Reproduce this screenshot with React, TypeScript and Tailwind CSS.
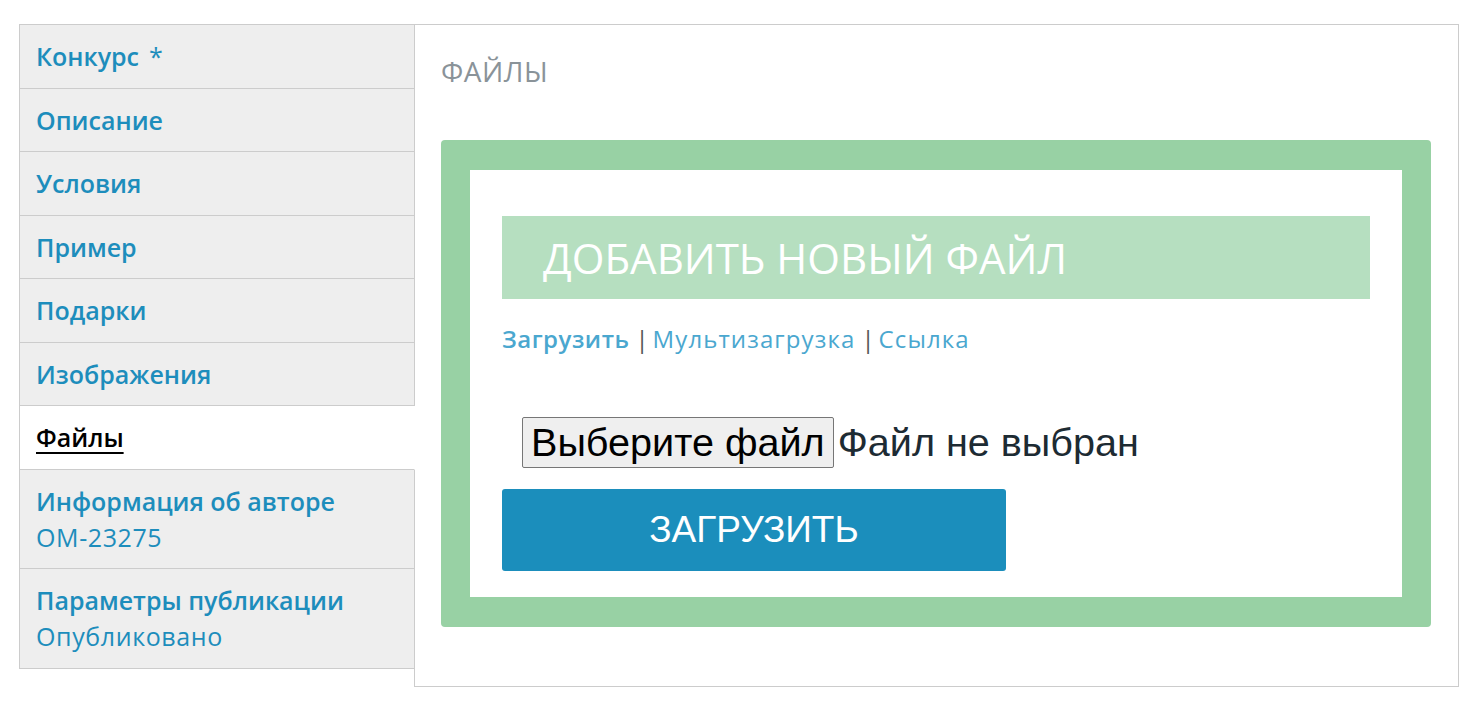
type NavItem = {
  label: string;
  sub?: string;
  required?: boolean;
  active?: boolean;
};

const NAV: NavItem[] = [
  { label: 'Конкурс', required: true },
  { label: 'Описание' },
  { label: 'Условия' },
  { label: 'Пример' },
  { label: 'Подарки' },
  { label: 'Изображения' },
  { label: 'Файлы', active: true },
  { label: 'Информация об авторе', sub: 'OM-23275' },
  { label: 'Параметры публикации', sub: 'Опубликовано' },
];

function Sidebar() {
  return (
    <ul className="relative z-10 -mr-px w-[396px] shrink-0 border-t border-l border-[#cccccc] font-['Open_Sans',sans-serif] text-[25px] leading-[36px]">
      {NAV.map((n) => (
        <li
          key={n.label}
          className={
            n.active
              ? 'border-b border-r border-b-[#cccccc] border-r-white bg-white py-[13.25px] pl-[16px]'
              : 'border-b border-r border-[#cccccc] bg-[#eeeeee] py-[13.25px] pl-[16px]'
          }
        >
          <a
            href="#"
            className={
              n.active
                ? 'font-semibold text-black underline decoration-[2px] underline-offset-[5px]'
                : 'font-semibold text-[#1d8dbc]'
            }
          >
            {n.label}
            {n.required && (
              <span className="ml-[10px] font-normal text-[#1d8dbc]">*</span>
            )}
          </a>
          {n.sub && <div className="tracking-[0.6px] text-[#1d8dbc]">{n.sub}</div>}
        </li>
      ))}
    </ul>
  );
}

function UploadBox() {
  return (
    <div className="rounded-[4px] bg-[#98d1a4] px-[29px] py-[30px]">
      <div className="bg-white px-[32px] pt-[46px] pb-[26px]">
        <div className="flex h-[83px] items-center bg-[#b6dfc0] pl-[41px]">
          <span className="font-['Open_Sans',sans-serif] text-[42px] leading-none text-white">
            ДОБАВИТЬ НОВЫЙ ФАЙЛ
          </span>
        </div>

        <div className="mt-[22px] font-['Open_Sans',sans-serif] text-[24px] leading-[36px] text-[#4aa7cf]">
          <a href="#" className="font-semibold tracking-[0.5px]">
            Загрузить
          </a>
          <span className="ml-[6px] mr-[4px] text-[#555555]">|</span>
          <a href="#" className="tracking-[1.1px]">
            Мультизагрузка
          </a>
          <span className="ml-[6px] mr-[4px] text-[#555555]">|</span>
          <a href="#" className="tracking-[1.1px]">
            Ссылка
          </a>
        </div>

        <div className="mt-[60px] flex items-center pl-[20px] font-['Liberation_Sans',Arial,sans-serif] text-[39.6px] leading-[45px]">
          <span className="rounded-[2px] border border-[#767676] bg-[#efefef] px-[8px] py-[2px] text-black">
            Выберите файл
          </span>
          <span className="ml-[4px] text-[#1d2b33]">Файл не выбран</span>
        </div>

        <button
          type="button"
          className="mt-[21px] flex h-[82px] w-[504px] items-center justify-center rounded-[3px] bg-[#1b8ebc] font-['Liberation_Sans',Arial,sans-serif] text-[37px] text-white"
        >
          ЗАГРУЗИТЬ
        </button>
      </div>
    </div>
  );
}

export default function App() {
  return (
    <div className="min-h-[711px] bg-white pt-[24px] pl-[19px]">
      <div className="flex w-[1440px] items-start">
        <Sidebar />
        <div className="flex-1 border border-[#cccccc] pl-[26px] pr-[27px] pt-[27px] pb-[59px]">
          <h2 className="font-['Open_Sans',sans-serif] text-[28px] leading-[38px] font-normal tracking-[0.5px] text-[#8a9399]">
            ФАЙЛЫ
          </h2>
          <div className="mt-[50px]">
            <UploadBox />
          </div>
        </div>
      </div>
    </div>
  );
}
